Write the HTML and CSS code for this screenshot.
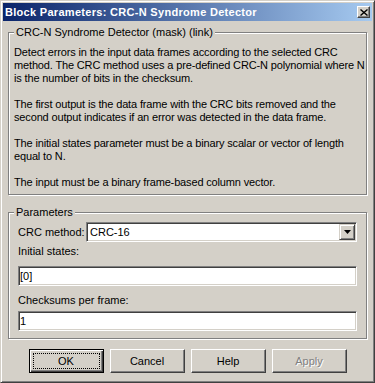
FILE: index.html
```html
<!DOCTYPE html>
<html lang="en">
<head>
  <meta charset="UTF-8" />
  <title>Block Parameters: CRC-N Syndrome Detector</title>
  <link rel="stylesheet" href="styles.css">
</head>
<body>
  <div class="window">
    <div class="titlebar">
      <span class="title">Block Parameters: CRC-N Syndrome Detector</span>
      <button class="close-btn" aria-label="Close">
        <svg width="8" height="7" viewBox="0 0 8 7">
          <path d="M0.5 0.5 L7.5 6.5 M7.5 0.5 L0.5 6.5" stroke="#000" stroke-width="1.4" fill="none" />
        </svg>
      </button>
    </div>

    <!-- Mask description -->
    <div class="group description">
      <div class="group-title">CRC-N Syndrome Detector (mask) (link)</div>
      <p>Detect errors in the input data frames according to the selected CRC<br>method. The CRC method uses a pre-defined CRC-N polynomial where N<br>is the number of bits in the checksum.</p>
      <p>The first output is the data frame with the CRC bits removed and the<br>second output indicates if an error was detected in the data frame.</p>
      <p>The initial states parameter must be a binary scalar or vector of length<br>equal to N.</p>
      <p>The input must be a binary frame-based column vector.</p>
    </div>

    <!-- Block parameters -->
    <div class="group params">
      <div class="group-title">Parameters</div>
      <div class="param-row">
        <label class="row-label">CRC method:</label>
        <div class="select-box">
          <span class="select-value">CRC-16</span>
          <span class="drop-btn">
            <svg width="7" height="4" viewBox="0 0 7 4"><path d="M0 0 H7 L3.5 4 Z" fill="#000" /></svg>
          </span>
        </div>
      </div>
      <label class="param-label first">Initial states:</label>
      <input class="param-input" type="text" value="[0]" />
      <label class="param-label">Checksums per frame:</label>
      <input class="param-input" type="text" value="1" />
    </div>

    <div class="button-row">
      <button class="dlg-btn default"><span class="focus-rect">OK</span></button>
      <button class="dlg-btn">Cancel</button>
      <button class="dlg-btn">Help</button>
      <button class="dlg-btn" disabled>Apply</button>
    </div>
  </div>
</body>
</html>
```

FILE: styles.css
```css
body {
  margin: 0;
  font-family: 'Liberation Sans', Arial, sans-serif;
  font-size: 11px;
  color: #000;
  background: #d4d0c8;
}
.window {
  box-sizing: border-box;
  width: 375px;
  height: 383px;
  padding: 2px;
  background: #d4d0c8;
  border: 1px solid;
  border-color: #d4d0c8 #404040 #404040 #d4d0c8;
  box-shadow: inset 1px 1px 0 #fff, inset -1px -1px 0 #808080;
}
.titlebar {
  display: flex;
  align-items: center;
  justify-content: space-between;
  height: 18px;
  padding: 0 2px 0 2px;
  background: linear-gradient(to right, #0a246a, #a6caf0);
}
.title {
  color: #fff;
  font-weight: bold;
  letter-spacing: 0.3px;
  line-height: 13px;
}
.close-btn {
  box-sizing: border-box;
  width: 13px;
  height: 12px;
  padding: 0;
  display: flex;
  align-items: center;
  justify-content: center;
  background: #d4d0c8;
  border: 1px solid;
  border-color: #fff #404040 #404040 #fff;
  box-shadow: inset -1px -1px 0 #808080;
}
.group {
  margin: 11px 5px 0 5px;
  padding: 0 5px 5px 5px;
  border: 1px solid #808080;
  box-shadow: inset 1px 1px 0 #fff, 1px 1px 0 #fff;
}
.group-title {
  display: table;
  margin-top: -7px;
  padding: 0 2px;
  line-height: 13px;
  background: #d4d0c8;
}
.description p {
  margin: 0 0 13px 0;
  line-height: 13px;
  white-space: nowrap;
  letter-spacing: -0.15px;
}
.description .group-title {
  margin-bottom: 7px;
}
.description p:last-child {
  margin-bottom: 0;
}
.params {
  margin-top: 17px;
  padding: 0 9px 7px 9px;
}
.params .group-title {
  margin-left: -4px;
}
.param-row {
  display: flex;
  align-items: center;
  margin-top: 3px;
}
.row-label {
  width: 68px;
  flex: none;
}
.select-box,
.param-input {
  box-sizing: border-box;
  height: 20px;
  background: #fff;
  border: 1px solid;
  border-color: #808080 #fff #fff #808080;
  box-shadow: inset 1px 1px 0 #404040, inset -1px -1px 0 #d4d0c8;
}
.select-box {
  flex: 1;
  display: flex;
  align-items: center;
  justify-content: space-between;
  padding: 0 1px 0 3px;
}
.drop-btn {
  box-sizing: border-box;
  width: 16px;
  height: 16px;
  display: flex;
  align-items: center;
  justify-content: center;
  background: #d4d0c8;
  border: 1px solid;
  border-color: #d4d0c8 #404040 #404040 #d4d0c8;
  box-shadow: inset 1px 1px 0 #fff, inset -1px -1px 0 #808080;
}
.param-label {
  display: block;
  line-height: 13px;
  margin: 8px 0 4px 0;
}
.param-label.first {
  margin: 3px 0 8px 0;
}
.param-input {
  display: block;
  width: 100%;
  margin: 0;
  padding: 0 0 0 1px;
  font: inherit;
  outline: none;
}
.button-row {
  display: flex;
  justify-content: center;
  gap: 6px;
  margin-top: 10px;
}
.dlg-btn {
  box-sizing: border-box;
  width: 75px;
  height: 24px;
  padding: 0;
  font: inherit;
  color: #000;
  background: #d4d0c8;
  border: 1px solid;
  border-color: #fff #404040 #404040 #fff;
  box-shadow: inset -1px -1px 0 #808080;
}
.dlg-btn.default {
  display: flex;
  align-items: stretch;
  padding: 3px;
  border-color: #000;
  box-shadow: inset 1px 1px 0 #fff, inset -1px -1px 0 #404040, inset -2px -2px 0 #808080;
}
.focus-rect {
  flex: 1;
  display: flex;
  align-items: center;
  justify-content: center;
  border: 1px dotted #000;
}
.dlg-btn:disabled {
  color: #808080;
  text-shadow: 1px 1px 0 #fff;
}
```
